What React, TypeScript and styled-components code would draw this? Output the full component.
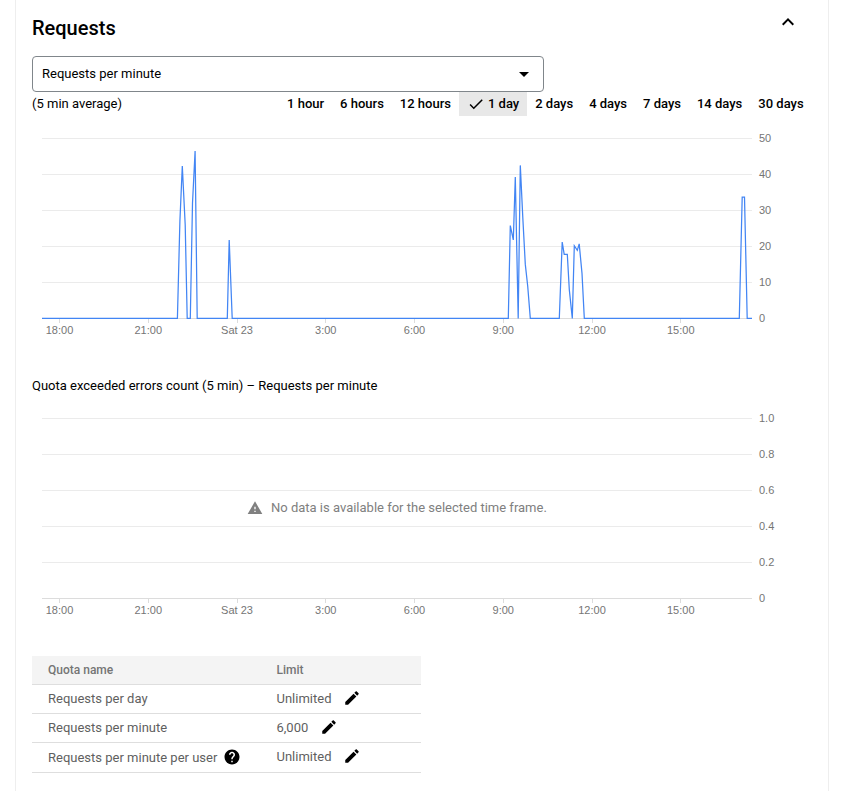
import React from "react";
import styled, { createGlobalStyle } from "styled-components";

const GlobalStyle = createGlobalStyle`
  *, *::before, *::after { box-sizing: border-box; }
  html, body { margin: 0; background: #fff; overflow: hidden; }
  body { font: 400 13px/20px Roboto, sans-serif; color: #000; }
`;

const Page = styled.div`
  height: 791px;
  padding: 0 17px 0 15px;
  overflow: hidden;
`;

const Card = styled.section`
  height: 800px;
  padding: 0 16px;
  border: 1px solid #eeeeee;
  border-top: 0;
`;

const CardHeader = styled.header`
  display: flex;
  justify-content: space-between;
  height: 56px;
  padding: 14px 12px 0 0;
`;

const Title = styled.h2`
  margin: 0;
  font-size: 20px;
  line-height: 28px;
  font-weight: 500;
`;

const CollapseButton = styled.button`
  width: 24px;
  height: 24px;
  margin-top: -4.5px;
  padding: 0;
  border: 0;
  background: none;
  color: #000;
`;

const MetricSelect = styled.button`
  display: flex;
  align-items: center;
  justify-content: space-between;
  width: 512px;
  height: 36px;
  padding: 0 14px 0 9px;
  border: 1px solid #80868b;
  border-radius: 4px;
  background: #fff;
  color: #000;
  font: inherit;
`;

const RangeBar = styled.div`
  display: flex;
  justify-content: space-between;
  height: 24px;
  line-height: 24px;
`;

const RangeList = styled.div`
  display: flex;
  margin-right: 0.4px;
`;

const RangeButton = styled.button<{ $selected?: boolean }>`
  display: flex;
  align-items: center;
  gap: 3px;
  height: 24px;
  padding: 0 8px;
  border: 0;
  background: ${(p) => (p.$selected ? "#e8e8e8" : "transparent")};
  color: #000;
  font: 500 13px/24px Roboto, sans-serif;
  white-space: nowrap;
`;

const ChartTitle = styled.h3`
  margin: 28px 0 0;
  font-size: 13px;
  line-height: 20px;
  font-weight: 400;
`;

const ChartFrame = styled.div<{ $top: number }>`
  display: grid;
  margin-top: ${(p) => p.$top}px;
  height: 220px;
  & > * { grid-area: 1 / 1; }
`;

const ChartSvg = styled.svg`
  display: block;
  overflow: visible;
  text { font: 11px "Liberation Sans", Arial, sans-serif; fill: #757575; }
`;

const EmptyMessage = styled.div`
  display: flex;
  align-items: center;
  gap: 8px;
  height: 20px;
  margin: 90px 0 0 215px;
  color: #808080;
`;

const QuotaTable = styled.div`
  width: 389px;
  margin-top: 28px;
  color: #5f5f5f;
`;

const QuotaRow = styled.div<{ $head?: boolean; $height?: number }>`
  display: grid;
  grid-template-columns: 228.5px 1fr;
  align-items: center;
  height: ${(p) => p.$height ?? 29}px;
  padding-left: 16px;
  border-bottom: 1px solid #dedede;
  background: ${(p) => (p.$head ? "#f4f4f4" : "transparent")};
  font-size: ${(p) => (p.$head ? 12 : 13)}px;
  font-weight: ${(p) => (p.$head ? 500 : 400)};
  color: ${(p) => (p.$head ? "#757575" : "inherit")};
`;

const NameCell = styled.div`
  display: flex;
  align-items: center;
  gap: 6px;
`;

const LimitCell = styled.div<{ $lift?: boolean }>`
  display: flex;
  align-items: center;
  gap: 11.5px;
  padding-bottom: ${(p) => (p.$lift ? 2 : 0)}px;
`;

const Icon = ({ d, size = 18 }: { d: string; size?: number }) => (
  <svg width={size} height={size} viewBox="0 0 24 24" fill="currentColor" display="block" aria-hidden="true">
    <path d={d} />
  </svg>
);

const ICONS = {
  collapse: "M12 8l-6 6 1.41 1.41L12 10.83l4.59 4.58L18 14z",
  check: "M9 16.17L4.83 12l-1.42 1.41L9 19 21 7l-1.41-1.41z",
  edit: "M3 17.25V21h3.75L17.81 9.94l-3.75-3.75L3 17.25zM20.71 7.04c.39-.39.39-1.02 0-1.41l-2.34-2.34c-.39-.39-1.02-.39-1.41 0l-1.83 1.83 3.75 3.75 1.83-1.83z",
  warning: "M1 21h22L12 2 1 21zm12-3h-2v-2h2v2zm0-4h-2v-4h2v4z",
  help: "M12 2C6.48 2 2 6.48 2 12s4.48 10 10 10 10-4.48 10-10S17.52 2 12 2zm1 17h-2v-2h2v2zm2.07-7.75l-.9.92C13.45 12.9 13 13.5 13 15h-2v-.5c0-1.1.45-2.1 1.17-2.83l1.24-1.26c.37-.36.59-.86.59-1.41 0-1.1-.9-2-2-2s-2 .9-2 2H8c0-2.21 1.79-4 4-4s4 1.79 4 4c0 .88-.36 1.68-.93 2.25z",
};

const RANGES = ["1 hour", "6 hours", "12 hours", "1 day", "2 days", "4 days", "7 days", "14 days", "30 days"];
const TIMES = ["18:00", "21:00", "Sat 23", "3:00", "6:00", "9:00", "12:00", "15:00"];

const REQUESTS: [number, number][] = [
  [10, 0], [145.4, 0], [147.9, 27], [150.3, 42.3], [153.2, 26], [155.2, 0], [158.3, 0], [160.5, 32], [163.1, 46.5],
  [165.2, 0], [195.3, 0], [197.2, 21.8], [200.2, 0], [476.3, 0], [478.3, 25.8], [481.3, 21.8], [483.3, 39.3],
  [486.2, 0], [488.3, 42.5], [490.8, 28], [493.3, 15], [495.7, 9], [498.3, 0], [527.3, 0], [530.2, 21.2],
  [532.2, 17.8], [535.3, 17.8], [537.3, 8], [540.3, 0], [542.3, 20.2], [545.3, 18.9], [547.2, 20.7],
  [550, 12.5], [552.3, 0], [707.3, 0], [710.2, 33.7], [712.5, 33.7], [715.2, 0], [720, 0],
];

function Chart({ labels, series }: { labels: string[]; series?: [number, number][] }) {
  return (
    <ChartSvg width="780" height="220" viewBox="0 0 780 220">
      {labels.map((label, i) => (
        <g key={label}>
          <rect x="10" y={10 + i * 36} width="710" height="1" fill={i === labels.length - 1 ? "#dcdcdc" : "#ebebeb"} />
          <text x="727" y={14 + i * 36}>{label}</text>
        </g>
      ))}
      {TIMES.map((time, i) => (
        <g key={time}>
          <rect x={Math.floor(27.5 + i * 88.75)} y="191" width="1" height="4" fill="#dcdcdc" />
          <text x={27.5 + i * 88.75} y="206" textAnchor="middle">{time}</text>
        </g>
      ))}
      {series && (
        <polyline
          points={series.map(([x, v]) => `${x},${190.4 - v * 3.6}`).join(" ")}
          fill="none"
          stroke="#4285f4"
          strokeWidth="1.25"
          strokeLinejoin="miter"
        />
      )}
    </ChartSvg>
  );
}

const CellIcon = styled.span`
  display: flex;
  margin-bottom: 2px;
  color: #000;
`;

const Edit = () => <CellIcon><Icon d={ICONS.edit} /></CellIcon>;

export default function App() {
  return (
    <Page>
      <GlobalStyle />
      <Card>
        <CardHeader>
          <Title>Requests</Title>
          <CollapseButton aria-label="Collapse"><Icon d={ICONS.collapse} size={24} /></CollapseButton>
        </CardHeader>
        <MetricSelect>
          <span>Requests per minute</span>
          <svg width="10" height="5" viewBox="0 0 10 5" aria-hidden="true"><path d="M0 0h10L5 5z" /></svg>
        </MetricSelect>
        <RangeBar>
          <span>(5 min average)</span>
          <RangeList>
            {RANGES.map((range) => (
              <RangeButton key={range} $selected={range === "1 day"}>
                {range === "1 day" && <Icon d={ICONS.check} />}
                {range}
              </RangeButton>
            ))}
          </RangeList>
        </RangeBar>
        <ChartFrame $top={12}>
          <Chart labels={["50", "40", "30", "20", "10", "0"]} series={REQUESTS} />
        </ChartFrame>
        <ChartTitle>Quota exceeded errors count (5 min) – Requests per minute</ChartTitle>
        <ChartFrame $top={12}>
          <Chart labels={["1.0", "0.8", "0.6", "0.4", "0.2", "0"]} />
          <EmptyMessage><Icon d={ICONS.warning} size={16} />No data is available for the selected time frame.</EmptyMessage>
        </ChartFrame>
        <QuotaTable>
          <QuotaRow $head><span>Quota name</span><span>Limit</span></QuotaRow>
          <QuotaRow>
            <NameCell>Requests per day</NameCell>
            <LimitCell>Unlimited<Edit /></LimitCell>
          </QuotaRow>
          <QuotaRow>
            <NameCell>Requests per minute</NameCell>
            <LimitCell>6,000<Edit /></LimitCell>
          </QuotaRow>
          <QuotaRow $height={30}>
            <NameCell>Requests per minute per user<CellIcon><Icon d={ICONS.help} /></CellIcon></NameCell>
            <LimitCell $lift>Unlimited<Edit /></LimitCell>
          </QuotaRow>
        </QuotaTable>
      </Card>
    </Page>
  );
}
